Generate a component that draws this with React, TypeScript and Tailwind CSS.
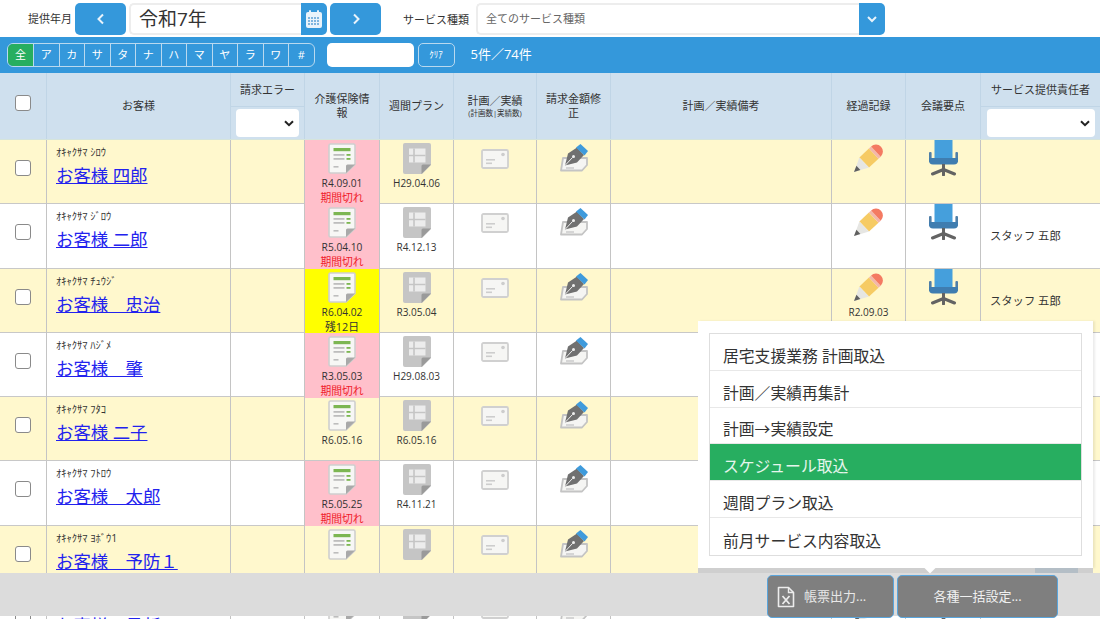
import React from "react";

const FONT = "font-['Open_Sans','Noto_Sans_CJK_JP',sans-serif]";

const DocIcon = () => (
  <svg width="28" height="31" viewBox="0 0 28 31" className="block">
    <path d="M1 2.500a1.500 1.500 0 0 1 1.500-1.500h23a1.500 1.500 0 0 1 1.500 1.500v19l-9 8.500H2.500a1.500 1.500 0 0 1-1.500-1.500z" fill="#f7f7f5" stroke="#cfcfcf" strokeWidth="1.600" />
    <rect x="5.500" y="5" width="17" height="3.200" fill="#7cb652" />
    <rect x="5.500" y="11" width="11" height="1.800" fill="#bdbdbd" />
    <rect x="18.500" y="11" width="4" height="1.800" fill="#7cb652" />
    <rect x="5.500" y="15" width="11" height="1.800" fill="#bdbdbd" />
    <rect x="18.500" y="15" width="4" height="1.800" fill="#7cb652" />
    <rect x="5.500" y="23" width="5" height="1.600" fill="#bdbdbd" />
    <path d="M18 30v-7a1.500 1.500 0 0 1 1.500-1.500H27z" fill="#a9a9a9" />
  </svg>
);

const PlanIcon = () => (
  <svg width="28" height="31" viewBox="0 0 28 31" className="block">
    <path d="M0 2a2 2 0 0 1 2-2h24a2 2 0 0 1 2 2v20l-9 9H2a2 2 0 0 1-2-2z" fill="#c5c5c5" />
    <rect x="6" y="5.500" width="16.500" height="14" fill="#ececec" />
    <path d="M11 5.500v14M6 12.500h16.500" stroke="#c5c5c5" strokeWidth="1.600" />
    <path d="M18.500 31v-8a1.500 1.500 0 0 1 1.500-1.500h8z" fill="#9a9a9a" />
  </svg>
);

const MailIcon = () => (
  <svg width="28" height="20" viewBox="0 0 28 20" className="block">
    <rect x="1" y="1" width="26" height="18" rx="1.500" fill="#f6f6f4" stroke="#d0d0d0" strokeWidth="1.800" />
    <rect x="5" y="10" width="9" height="1.600" fill="#cdcdcd" />
    <rect x="5" y="13.500" width="6" height="1.600" fill="#cdcdcd" />
    <circle cx="22" cy="5.500" r="1.800" fill="#cdcdcd" />
  </svg>
);

const PenIcon = () => (
  <svg width="28" height="28" viewBox="0 0 28 28" className="block">
    <path d="M3 14h24v7l-5 5.500H1z" fill="#f5f5f3" stroke="#c4c4c4" strokeWidth="1.800" strokeLinejoin="round" />
    <path d="M5 21.500l3-12 9-6 7 7.500-7 7.500z" fill="#707070" />
    <path d="M5 21.500l7.500-8" stroke="#efefef" strokeWidth="1" />
    <circle cx="13.500" cy="12.500" r="1.500" fill="#efefef" />
    <path d="M16 3.500l4.500-3.500 7.500 7-3.500 4.500z" fill="#3f9bdc" />
    <path d="M6 24h8" stroke="#c8c8c8" strokeWidth="1.400" />
  </svg>
);

const PencilIcon = () => (
  <svg width="29" height="28" viewBox="0 0 29 28" className="block">
    <path d="M5.400 13.400L14.900 4.500L24.500 14.700L15 23.600Z" fill="#f6cb64" />
    <path d="M14.900 4.500L17.100 2.500L26.700 12.700L24.500 14.700Z" fill="#f3b7aa" />
    <path d="M17.100 2.500A7 7 0 0 1 26.700 12.700Z" fill="#f47a62" />
    <path d="M5.400 13.400L15 23.600L0 28Z" fill="#e6e6e3" />
    <path d="M2.400 21.700L6.400 26.100L0 28Z" fill="#5f5f5f" />
  </svg>
);

const ChairIcon = () => (
  <svg width="29" height="36" viewBox="0 0 29 36" className="block">
    <rect x="5.500" y="0" width="18" height="19" fill="#459fdc" />
    <rect x="0" y="12" width="2.600" height="10" rx="1" fill="#4f7fa8" />
    <rect x="26.400" y="12" width="2.600" height="10" rx="1" fill="#4f7fa8" />
    <path d="M0 18h29v2.500a4 4 0 0 1-4 4H4a4 4 0 0 1-4-4z" fill="#3f7db0" />
    <rect x="13" y="24" width="3" height="6" fill="#636363" />
    <path d="M14.500 29.500L3.500 34M14.500 29.500L25.500 34M14.500 29.500V35" fill="none" stroke="#636363" strokeWidth="3" strokeLinecap="round" />
  </svg>
);

const CalendarIcon = () => (
  <svg width="18" height="20" viewBox="0 0 18 20" className="block">
    <rect x="1" y="3" width="16" height="16" rx="2" fill="#e9f3fb" />
    <rect x="4" y="1" width="2" height="4" rx="1" fill="#e9f3fb" />
    <rect x="12" y="1" width="2" height="4" rx="1" fill="#e9f3fb" />
    <g fill="#7fb5df">
      {[8, 11, 14].map((y) =>
        [3, 6, 9, 12].map((x) => <rect key={`${x}-${y}`} x={x} y={y} width="2" height="2" />)
      )}
    </g>
  </svg>
);

const ExcelIcon = () => (
  <svg width="18" height="22" viewBox="0 0 18 22" className="block">
    <path d="M1.500 1.500h10l5 5v14h-15z" fill="none" stroke="#ececec" strokeWidth="1.600" strokeLinejoin="round" />
    <path d="M11.500 1.500v5h5" fill="none" stroke="#ececec" strokeWidth="1.400" />
    <path d="M5.500 10l7 8M12.500 10l-7 8" stroke="#ececec" strokeWidth="1.800" />
  </svg>
);

const Chevron = ({ dir }: { dir: "l" | "r" | "d" }) => (
  <svg width="12" height="12" viewBox="0 0 12 12" className="block">
    <path
      d={dir === "l" ? "M8 1.500 3.500 6 8 10.500" : dir === "r" ? "M4 1.500 8.500 6 4 10.500" : "M2 4l4 4 4-4"}
      fill="none"
      stroke="#e8f3fb"
      strokeWidth="2"
    />
  </svg>
);

const NativeSelect = ({ className }: { className: string }) => (
  <div className={`bg-white rounded-[4px] flex items-center justify-end pr-[5px] ${className}`}>
    <svg width="10" height="7" viewBox="0 0 10 7">
      <path d="M1 1.200 5 5.200 9 1.200" fill="none" stroke="#222" strokeWidth="2" />
    </svg>
  </div>
);

type Row = {
  kana: string;
  name: string;
  care?: string;
  careNote?: string;
  careBg?: string;
  plan?: string;
  log?: string;
  staff?: string;
};

const rows: Row[] = [
  { kana: "ｵｷｬｸｻﾏ ｼﾛｳ", name: "お客様 四郎", care: "R4.09.01", careNote: "期間切れ", careBg: "bg-[#ffc0cb]", plan: "H29.04.06" },
  { kana: "ｵｷｬｸｻﾏ ｼﾞﾛｳ", name: "お客様 二郎", care: "R5.04.10", careNote: "期間切れ", careBg: "bg-[#ffc0cb]", plan: "R4.12.13", staff: "スタッフ 五郎" },
  { kana: "ｵｷｬｸｻﾏ ﾁｭｳｼﾞ", name: "お客様　忠治", care: "R6.04.02", careNote: "残12日", careBg: "bg-[#ffff00]", plan: "R3.05.04", log: "R2.09.03", staff: "スタッフ 五郎" },
  { kana: "ｵｷｬｸｻﾏ ﾊｼﾞﾒ", name: "お客様　肇", care: "R3.05.03", careNote: "期間切れ", careBg: "bg-[#ffc0cb]", plan: "H29.08.03" },
  { kana: "ｵｷｬｸｻﾏ ﾌﾀｺ", name: "お客様 二子", care: "R6.05.16", plan: "R6.05.16" },
  { kana: "ｵｷｬｸｻﾏ ﾌﾄﾛｳ", name: "お客様　太郎", care: "R5.05.25", careNote: "期間切れ", careBg: "bg-[#ffc0cb]", plan: "R4.11.21" },
  { kana: "ｵｷｬｸｻﾏ ﾖﾎﾞｳ1", name: "お客様　予防１" },
  { kana: "ｵｷｬｸｻﾏ ｻｲｼﾝ", name: "お客様　最新" },
];

const GRID = "grid grid-cols-[47px_184px_74px_75px_74px_83px_74px_221px_74px_75px_119px]";
const CELL = "border-r border-[#c4c4c4] flex flex-col items-center";
const HEAD = "border-r border-[#c0d5e6] flex items-center justify-center";
const kanaBtn = ["ア", "カ", "サ", "タ", "ナ", "ハ", "マ", "ヤ", "ラ", "ワ", "#"];
const menu = ["居宅支援業務 計画取込", "計画／実績再集計", "計画→実績設定", "スケジュール取込", "週間プラン取込", "前月サービス内容取込"];

const Checkbox = () => <div className="w-[16px] h-[16px] rounded-[3px] border border-[#8a8a8a] bg-white" />;

export default function App() {
  return (
    <div className={`relative w-[1100px] h-[619px] overflow-hidden bg-white text-[#333] ${FONT}`}>
      {/* top filter bar */}
      <div className="h-[37px] flex items-start pt-[3px] pl-[28px]">
        <span className="text-[11px] leading-[32px] w-[47px] whitespace-nowrap">提供年月</span>
        <button className="w-[51px] h-[32px] rounded-[5px] bg-[#3498db] flex items-center justify-center">
          <Chevron dir="l" />
        </button>
        <div className="ml-[3px] w-[172px] h-[32px] border-2 border-[#ededed] border-r-0 rounded-l-[5px] flex items-center pl-[8px] text-[19px] bg-white">
          令和7年
        </div>
        <div className="w-[26px] h-[32px] bg-[#3498db] rounded-r-[5px] flex items-center justify-center">
          <CalendarIcon />
        </div>
        <button className="ml-[3px] w-[51px] h-[32px] rounded-[5px] bg-[#3498db] flex items-center justify-center">
          <Chevron dir="r" />
        </button>
        <span className="ml-[22px] text-[11px] leading-[34px] w-[66px] whitespace-nowrap">サービス種類</span>
        <div className="ml-[7px] w-[383px] h-[32px] border-2 border-[#ededed] border-r-0 rounded-l-[5px] flex items-center pl-[8px] text-[11px] text-[#666]">
          全てのサービス種類
        </div>
        <div className="w-[26px] h-[32px] bg-[#3498db] rounded-r-[5px] flex items-center justify-center">
          <Chevron dir="d" />
        </div>
      </div>

      {/* blue search bar */}
      <div className="h-[36px] bg-[#3498db] flex items-center pl-[7px] text-white">
        <div className="flex h-[24px] border border-[#b9d9ef] rounded-[6px] overflow-hidden">
          <div className="w-[25px] bg-[#27ae60] flex items-center justify-center text-[11px]">全</div>
          {kanaBtn.map((k) => (
            <div key={k} className="w-[25.500px] border-l border-[#b9d9ef] flex items-center justify-center text-[11px]">
              {k}
            </div>
          ))}
        </div>
        <div className="ml-[12px] w-[87px] h-[24px] bg-white rounded-[5px]" />
        <div className="ml-[4px] w-[37px] h-[24px] border border-[#b9d9ef] rounded-[5px] flex items-center justify-center text-[9px]">ｸﾘｱ</div>
        <div className="ml-[16px] text-[13px]">5件／74件</div>
      </div>

      {/* table header */}
      <div className={`${GRID} h-[67px] bg-[#cfe0ee] border-b border-[#d5e4dc] text-[11px] leading-[14px]`}>
        <div className={`${HEAD} pb-[7px]`}>
          <Checkbox />
        </div>
        <div className={HEAD}>お客様</div>
        <div className="border-r border-[#c0d5e6] flex flex-col">
          <div className="h-[34px] border-b border-[#c0d5e6] flex items-center justify-center">請求エラー</div>
          <div className="flex-1 flex items-center justify-center">
            <NativeSelect className="w-[63px] h-[28px]" />
          </div>
        </div>
        <div className={`${HEAD} text-center px-[8px]`}>介護保険情報</div>
        <div className={`${HEAD} whitespace-nowrap`}>週間プラン</div>
        <div className="border-r border-[#c0d5e6] flex flex-col items-center justify-center">
          <span>計画／実績</span>
          <span className="text-[7.500px] leading-[10px]">(計画数|実績数)</span>
        </div>
        <div className={`${HEAD} text-center px-[5px]`}>請求金額修正</div>
        <div className={HEAD}>計画／実績備考</div>
        <div className={HEAD}>経過記録</div>
        <div className={HEAD}>会議要点</div>
        <div className="flex flex-col">
          <div className="h-[34px] border-b border-[#c0d5e6] flex items-center justify-center whitespace-nowrap">サービス提供責任者</div>
          <div className="flex-1 flex items-center justify-center">
            <NativeSelect className="w-[108px] h-[28px]" />
          </div>
        </div>
      </div>

      {/* rows */}
      {rows.map((r, i) => (
        <div
          key={r.kana}
          className={`${GRID} h-[64.300px] border-b border-[#c8c8c8] ${i % 2 === 0 ? "bg-[#fff8cd]" : "bg-white"}`}
        >
          <div className={`${CELL} pt-[20px]`}>
            <Checkbox />
          </div>
          <div className="border-r border-[#c4c4c4] pl-[9px] pt-[7px]">
            <div className="text-[10.500px] leading-[11px] h-[11px] whitespace-nowrap">{r.kana}</div>
            <a className="block mt-[5px] text-[17.400px] leading-[24px] text-[#2222ee] underline whitespace-pre">{r.name}</a>
          </div>
          <div className="border-r border-[#c4c4c4]" />
          <div className={`${CELL} pt-[3px] ${r.careBg ?? ""}`}>
            <DocIcon />
            {r.care && <div className="mt-[2px] text-[10.200px] leading-[14px] whitespace-nowrap">{r.care}</div>}
            {r.careNote && (
              <div className={`text-[10.800px] leading-[15px] whitespace-nowrap ${r.careNote === "期間切れ" ? "text-[#f01c2c]" : "text-[#333]"}`}>
                {r.careNote}
              </div>
            )}
          </div>
          <div className={`${CELL} pt-[3px]`}>
            <PlanIcon />
            {r.plan && <div className="mt-[2px] text-[10px] leading-[14px] whitespace-nowrap">{r.plan}</div>}
          </div>
          <div className={`${CELL} pt-[9px]`}>
            <MailIcon />
          </div>
          <div className={`${CELL} pt-[4px]`}>
            <PenIcon />
          </div>
          <div className="border-r border-[#c4c4c4]" />
          <div className={`${CELL} pt-[4px]`}>
            <PencilIcon />
            {r.log && <div className="mt-[4px] text-[10px] leading-[14px] whitespace-nowrap">{r.log}</div>}
          </div>
          <div className={`${CELL} pt-0`}>
            <ChairIcon />
          </div>
          <div className="flex items-center pl-[9px] text-[11.300px]">{r.staff}</div>
        </div>
      ))}

      {/* bottom action bar */}
      <div className="absolute left-0 top-[573px] w-[1100px] h-[43px] bg-[#dcdcdc] flex justify-end pr-[42px] pt-[2px] gap-[3px]">
        <button className="w-[127px] h-[43px] bg-[#7f7f7f] border border-[#5aa5dc] rounded-[5px] flex items-center pl-[9px] gap-[9px] text-[#e8e8e8] text-[13px]">
          <ExcelIcon />
          <span>帳票出力...</span>
        </button>
        <button className="w-[161px] h-[43px] bg-[#7f7f7f] border border-[#5aa5dc] rounded-[5px] flex items-center justify-center text-[#f0f0f0] text-[13px]">
          各種一括設定...
        </button>
      </div>

      {/* popup menu */}
      <div className="absolute left-[698px] top-[321px] w-[395px] h-[247px] bg-white shadow-[0_5px_0_#cfcfcf,2px_0_2px_rgba(0,0,0,0.08)] px-[11px] pt-[12px]">
        <div className="border border-[#dedede] text-[15.800px] leading-[24px] text-[#333]">
          {menu.map((m, i) => (
            <div
              key={m}
              className={`h-[36.800px] flex items-end pb-[2px] pl-[13px] ${
                i === 3 ? "bg-[#27ae60] text-[#e6f5ec]" : ""
              } ${i < 5 ? "border-b border-[#e8e8e8]" : ""}`}
            >
              {m}
            </div>
          ))}
        </div>
        <div className="absolute left-[226px] bottom-[-3px] w-[12px] h-[12px] bg-white rotate-45" />
      </div>
      <div className="absolute left-[1035px] top-[568px] w-[43px] h-[5px] bg-[#b4bec6]" />
    </div>
  );
}
